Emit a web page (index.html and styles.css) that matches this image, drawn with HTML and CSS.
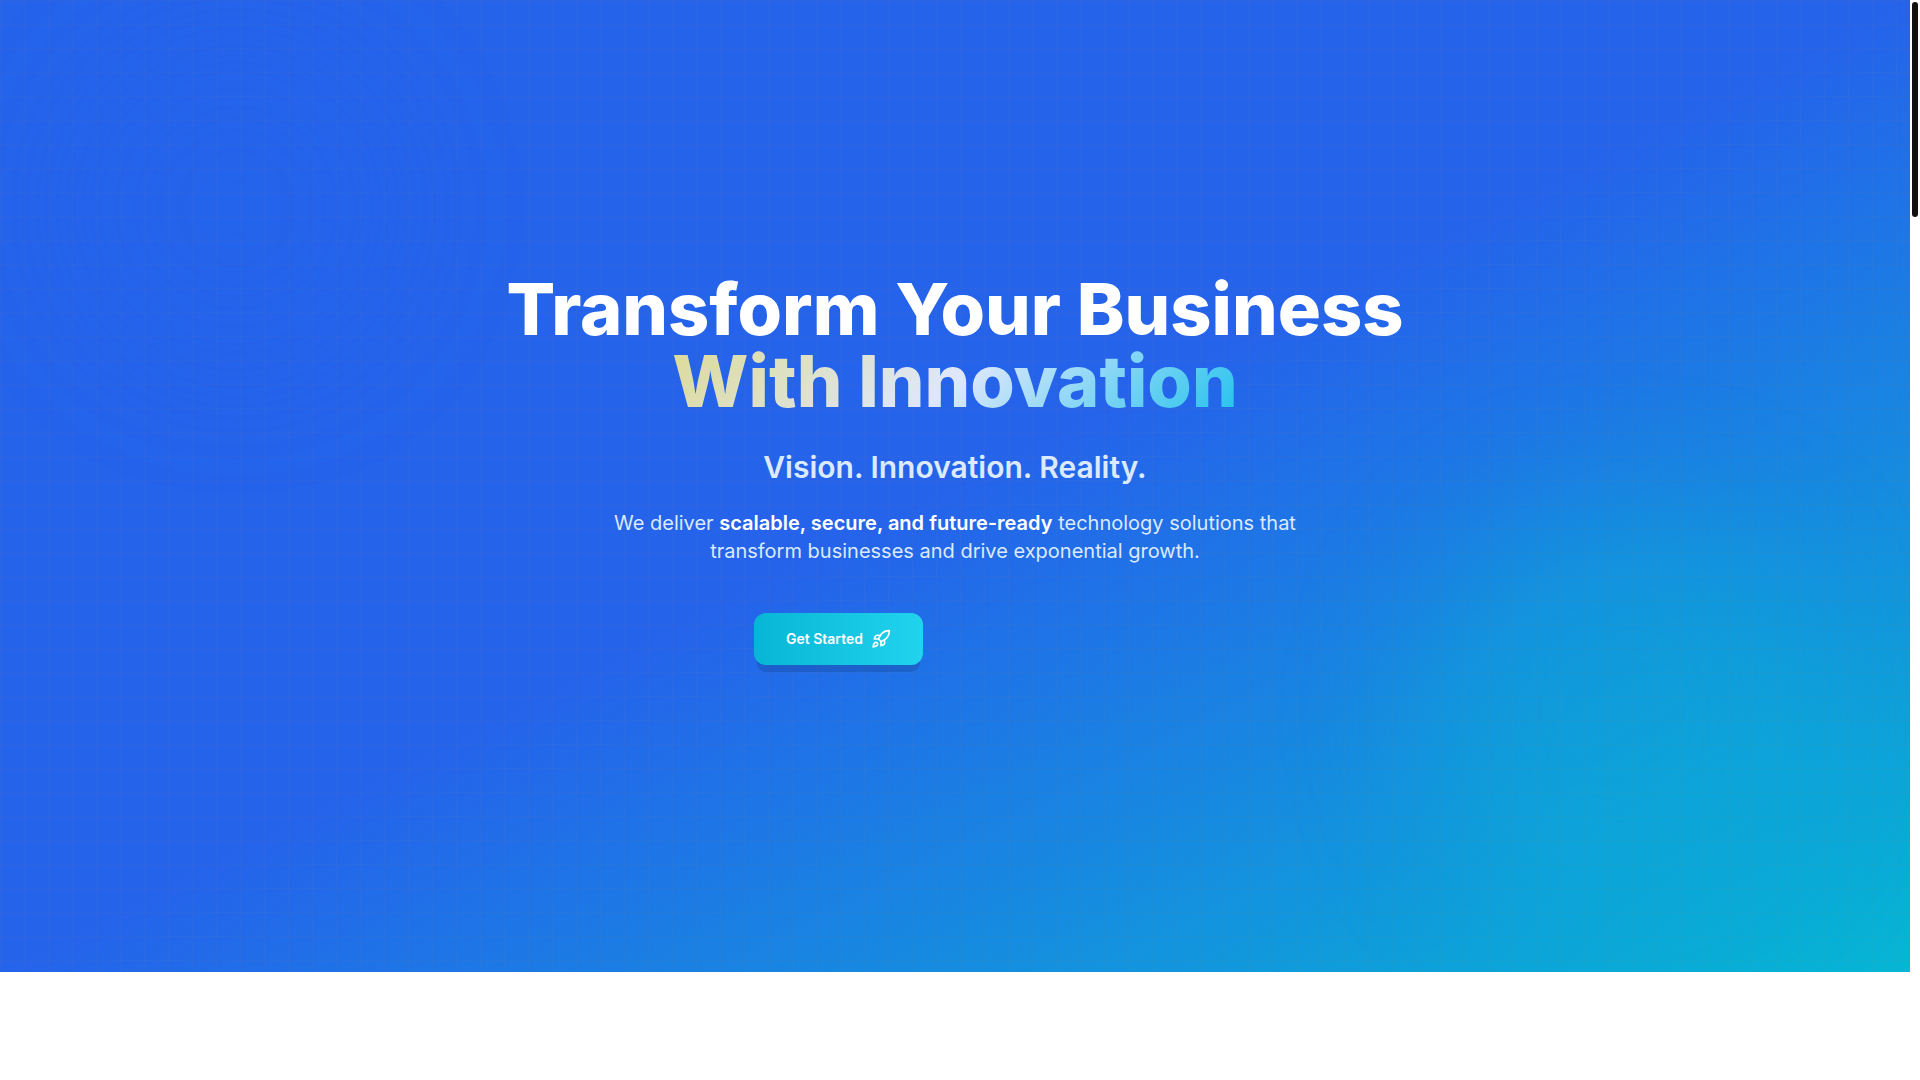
FILE: index.html
```html
<!DOCTYPE html>
<html lang="en">
<head>
  <meta charset="UTF-8">
  <meta name="viewport" content="width=device-width, initial-scale=1.0">
  <title>Transform Your Business With Innovation</title>
  <link rel="stylesheet" href="styles.css">
</head>
<body>

  <main class="page">
    <section class="hero">
      <div class="glow glow-left"></div>
      <div class="glow glow-right"></div>
      <div class="hero-grid"></div>

      <div class="hero-content">
        <h1>Transform Your Business<br><span class="highlight">With Innovation</span></h1>
        <h2>Vision. Innovation. Reality.</h2>
        <p>We deliver <strong>scalable, secure, and future-ready</strong> technology solutions that transform businesses and drive exponential growth.</p>
        <div class="actions">
          <button type="button" class="btn">
            Get Started
            <svg class="icon" viewBox="0 0 24 24" aria-hidden="true">
              <path d="M4.5 16.5c-1.5 1.26-2 5-2 5s3.74-.5 5-2c.71-.84.7-2.13-.09-2.91a2.18 2.18 0 0 0-2.91-.09z"/>
              <path d="m12 15-3-3a22 22 0 0 1 2-3.95A12.88 12.88 0 0 1 22 2c0 2.72-.78 7.5-6 11a22.35 22.35 0 0 1-4 2z"/>
              <path d="M9 12H4s.55-3.03 2-4c1.62-1.08 5 0 5 0"/>
              <path d="M12 15v5s3.03-.55 4-2c1.08-1.62 0-5 0-5"/>
            </svg>
          </button>
        </div>
      </div>
    </section>
  </main>

  <div class="scroll-track">
    <div class="scroll-thumb"></div>
  </div>

</body>
</html>
```

FILE: styles.css
```css
* {
  box-sizing: border-box;
}

body {
  margin: 0;
  display: flex;
  height: 100vh;
  overflow: hidden;
  background: #fff;
  font-family: Inter, sans-serif;
}

.page {
  flex: 1;
}

.hero {
  position: relative;
  display: flex;
  align-items: center;
  justify-content: center;
  min-height: 90vh;
  padding: 0 24px 34px;
  overflow: hidden;
  background: linear-gradient(to bottom right, #2563eb, #2563eb 50%, #06b6d4);
  color: #fff;
  text-align: center;
}

/* background layers */
.hero-grid {
  position: absolute;
  inset: 0;
  background-image:
    linear-gradient(to right, #80808012 1px, transparent 1px),
    linear-gradient(to bottom, #80808012 1px, transparent 1px);
  background-size: 24px 24px;
}

.glow {
  position: absolute;
  border-radius: 50%;
  filter: blur(64px);
}

.glow-left {
  top: 48px;
  left: 4%;
  width: 320px;
  height: 320px;
  background: rgba(37, 99, 235, 0.2);
}

.glow-right {
  right: 4%;
  bottom: 48px;
  width: 420px;
  height: 420px;
  background: rgba(6, 182, 212, 0.3);
}

.hero-content {
  position: relative;
  display: flex;
  flex-direction: column;
  align-items: center;
}

h1 {
  margin: 0 0 32px;
  font-size: 72px;
  font-weight: 800;
  line-height: 72px;
}

.highlight {
  display: inline-block;
  background: linear-gradient(135deg, #fef08a, #fff, #22d3ee);
  -webkit-background-clip: text;
  background-clip: text;
  color: transparent;
  opacity: 0.85;
  vertical-align: top;
}

h2 {
  margin: 0 0 24px;
  font-size: 30px;
  font-weight: 600;
  line-height: 36px;
  color: #dbeafe;
}

p {
  max-width: 720px;
  margin: 0 0 48px;
  font-size: 20px;
  line-height: 28px;
  color: #dbeafe;
}

strong {
  font-weight: 600;
  color: #fff;
}

.actions {
  display: flex;
  width: 402px;
}

.btn {
  display: flex;
  align-items: center;
  gap: 8px;
  padding: 16px 32px;
  border: none;
  border-radius: 12px;
  background: linear-gradient(to right, #06b6d4, #22d3ee);
  box-shadow: 0 10px 0 -3px rgba(0, 0, 0, 0.12);
  color: #fff;
  font-family: inherit;
  font-size: 14px;
  font-weight: 600;
  line-height: 20px;
  cursor: pointer;
}

.icon {
  width: 20px;
  height: 20px;
  fill: none;
  stroke: currentColor;
  stroke-width: 2;
  stroke-linecap: round;
  stroke-linejoin: round;
}

/* scrollbar */
.scroll-track {
  width: 10px;
  padding: 2px;
  background: #fff;
}

.scroll-thumb {
  height: 20%;
  border-radius: 3px;
  background: #111;
}
```
